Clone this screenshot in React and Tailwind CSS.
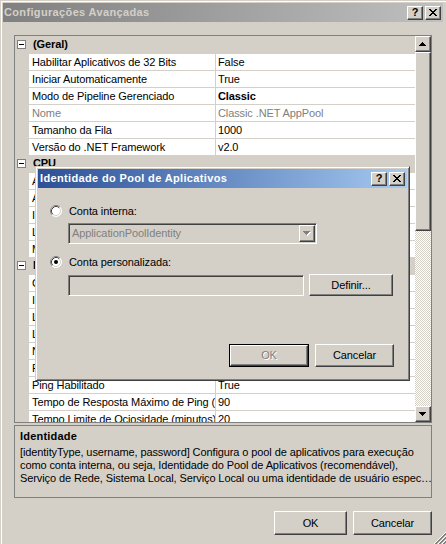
import React from 'react'

// Classic 3D edges
const raised =
  'border border-t-white border-l-white border-r-[#404040] border-b-[#404040] shadow-[inset_-1px_-1px_0_#808080] bg-[#d4d0c8]'
const sunken =
  'border border-t-[#808080] border-l-[#808080] border-r-white border-b-white shadow-[inset_1px_1px_0_#404040,inset_-1px_-1px_0_#d4d0c8]'

const rows = [
  { cat: '(Geral)' },
  { n: 'Habilitar Aplicativos de 32 Bits', v: 'False' },
  { n: 'Iniciar Automaticamente', v: 'True' },
  { n: 'Modo de Pipeline Gerenciado', v: 'Classic', bold: true },
  { n: 'Nome', v: 'Classic .NET AppPool', gray: true },
  { n: 'Tamanho da Fila', v: '1000' },
  { n: 'Versão do .NET Framework', v: 'v2.0' },
  { cat: 'CPU' },
  { n: 'Ação de Limite', v: 'NoAction' },
  { n: 'Afinidade de Processador Habilitada', v: 'False' },
  { n: 'Intervalo de Limite (minutos)', v: '5' },
  { n: 'Limite', v: '0' },
  { n: 'Máscara de Afinidade do Processador', v: '4294967295' },
  { cat: 'Modelo de Processo' },
  { n: 'Carregar Perfil de Usuário', v: 'False' },
  { n: 'Identidade', v: 'NetworkService' },
  { n: 'Limite de Tempo de Desligamento (segundos)', v: '90' },
  { n: 'Limite de Tempo de Inicialização (segundos)', v: '90' },
  { n: 'Número Máximo de Processos de Trabalho', v: '1' },
  { n: 'Período de Ping (segundos)', v: '30' },
  { n: 'Ping Habilitado', v: 'True' },
  { n: 'Tempo de Resposta Máximo de Ping (segundos)', v: '90' },
  { n: 'Tempo Limite de Ociosidade (minutos)', v: '20' },
  { cat: 'Reciclagem' },
]

function Arrow({ up, color = '#000', shadow }) {
  const bars = up ? [3, 2, 1, 0] : [0, 1, 2, 3]
  return (
    <svg width="8" height="5" viewBox="0 0 8 5" shapeRendering="crispEdges">
      {shadow &&
        bars.map((b, i) => <rect key={'s' + i} x={b + 1} y={i + 1} width={7 - b * 2} height="1" fill="#fff" />)}
      {bars.map((b, i) => (
        <rect key={i} x={b} y={i} width={7 - b * 2} height="1" fill={color} />
      ))}
    </svg>
  )
}

function CaptionButtons() {
  return (
    <div className="flex gap-[2px]">
      <div className={`${raised} flex h-[14px] w-[16px] items-center justify-center text-[11px] leading-none font-bold text-black`}>
        ?
      </div>
      <div className={`${raised} flex h-[14px] w-[16px] items-center justify-center`}>
        <svg width="8" height="7" viewBox="0 0 8 7" shapeRendering="crispEdges">
          <path d="M0 0h2v1h-2zM6 0h2v1h-2zM1 1h2v1h-2zM5 1h2v1h-2zM2 2h4v1h-4zM3 3h2v1h-2zM2 4h4v1h-4zM1 5h2v1h-2zM5 5h2v1h-2zM0 6h2v1h-2zM6 6h2v1h-2z" fill="#000" />
        </svg>
      </div>
    </div>
  )
}

function Radio({ checked }) {
  return (
    <svg width="12" height="12" viewBox="0 0 12 12" className="shrink-0">
      <circle cx="6" cy="6" r="5.5" fill="#fff" />
      <path d="M2.11 9.89A5.5 5.5 0 0 1 9.89 2.11" fill="none" stroke="#808080" />
      <path d="M9.89 2.11A5.5 5.5 0 0 1 2.11 9.89" fill="none" stroke="#fff" />
      <path d="M2.82 9.18A4.5 4.5 0 0 1 9.18 2.82" fill="none" stroke="#404040" />
      <path d="M9.18 2.82A4.5 4.5 0 0 1 2.82 9.18" fill="none" stroke="#d4d0c8" />
      {checked && <circle cx="6" cy="6" r="2" fill="#000" />}
    </svg>
  )
}

function GridRow({ r }) {
  if (r.cat) {
    return (
      <div className="flex h-[17px] shrink-0 items-center bg-[#d4d0c8]">
        <div className="ml-[2px] flex h-[9px] w-[9px] items-center justify-center border border-[#808080] bg-white">
          <div className="h-px w-[5px] bg-black" />
        </div>
        <span className="ml-[7px] font-bold">{r.cat}</span>
      </div>
    )
  }
  const tone = r.gray ? 'text-[#808080]' : 'text-black'
  return (
    <div className="flex h-[17px] shrink-0 bg-[#d4d0c8]">
      <div className="w-[14px] shrink-0" />
      <div className="flex flex-1 border-t border-[#d4d0c8] bg-white">
        <div className={`w-[186px] shrink-0 overflow-hidden pl-[3px] leading-[16px] whitespace-nowrap ${tone}`}>{r.n}</div>
        <div className="w-px shrink-0 bg-[#d4d0c8]" />
        <div className={`flex-1 overflow-hidden pl-[2px] leading-[16px] whitespace-nowrap ${tone} ${r.bold ? 'font-bold' : ''}`}>
          {r.v}
        </div>
      </div>
    </div>
  )
}

function Scrollbar() {
  return (
    <div className="flex w-[16px] shrink-0 flex-col">
      <div className={`${raised} flex h-[16px] shrink-0 items-center justify-center`}>
        <Arrow up />
      </div>
      <div className={`${raised} h-[179px] shrink-0`} />
      <div className="flex-1 bg-[repeating-conic-gradient(#ffffff_0_25%,#d4d0c8_0_50%)] bg-[length:2px_2px]" />
      <div className={`${raised} flex h-[16px] shrink-0 items-center justify-center`}>
        <Arrow />
      </div>
    </div>
  )
}

function IdentityDialog() {
  return (
    <div className="absolute top-[166px] left-[35px] flex h-[215px] w-[375px] flex-col border border-t-[#d4d0c8] border-l-[#d4d0c8] border-r-[#404040] border-b-[#404040] bg-[#d4d0c8] p-[2px] shadow-[inset_1px_1px_0_#fff,inset_-1px_-1px_0_#808080]">
      <div className="flex h-[19px] shrink-0 items-center justify-between bg-linear-to-r from-[#2e5096] to-[#a6caf0] pr-[2px] pl-[2px]">
        <span className="text-[11px] font-bold tracking-[0.35px] text-white">Identidade do Pool de Aplicativos</span>
        <CaptionButtons />
      </div>

      <div className="flex flex-1 flex-col pr-[13px] pl-[12px]">
        <div className="mt-[14px] flex h-[18px] items-center gap-[7px]">
          <Radio />
          <span>Conta interna:</span>
        </div>
        <div className={`${sunken} mt-[3px] ml-[18px] flex h-[21px] w-[249px] items-center justify-between bg-[#d4d0c8] pr-[1px] pl-[3px]`}>
          <span className="text-[#808080]">ApplicationPoolIdentity</span>
          <div className={`${raised} flex h-[17px] w-[16px] items-center justify-center`}>
            <Arrow color="#808080" shadow />
          </div>
        </div>

        <div className="mt-[9px] flex h-[18px] items-center gap-[7px]">
          <Radio checked />
          <span>Conta personalizada:</span>
        </div>
        <div className="mt-[3px] ml-[18px] flex h-[22px] items-center gap-[5px]">
          <div className={`${sunken} h-[21px] w-[236px] bg-[#d4d0c8]`} />
          <div className={`${raised} flex h-[22px] w-[84px] items-center justify-center`}>Definir...</div>
        </div>

        <div className="mt-[48px] flex justify-end gap-[6px]">
          <div className="h-[23px] w-[80px] border border-black">
            <div className={`${raised} flex h-full w-full items-center justify-center text-[#808080] [text-shadow:1px_1px_0_#fff]`}>
              OK
            </div>
          </div>
          <div className={`${raised} flex h-[23px] w-[79px] items-center justify-center`}>Cancelar</div>
        </div>
      </div>
    </div>
  )
}

export default function App() {
  return (
    <div className="relative h-[544px] w-[446px] overflow-hidden bg-[#d4d0c8] px-[3px] pt-[3px] font-['Liberation_Sans',Arial,sans-serif] text-[11px] tracking-[-0.1px] text-black shadow-[inset_1px_1px_0_#d4d0c8,inset_2px_2px_0_#fff]">
      <div className="flex h-[19px] items-center justify-between bg-linear-to-r from-[#808080] to-[#c0c0c0] pr-[2px] pl-[1px]">
        <span className="text-[11px] font-bold tracking-[0.35px] text-[#d4d0c8]">Configurações Avançadas</span>
        <CaptionButtons />
      </div>

      <div className="px-[11px]">
        <div className="mt-[13px] flex h-[388px] overflow-hidden border border-[#808080] bg-[#d4d0c8]">
          <div className="flex flex-1 flex-col overflow-hidden">
            {rows.map((r, i) => (
              <GridRow key={i} r={r} />
            ))}
          </div>
          <Scrollbar />
        </div>

        <div className="mt-[2px] h-[73px] border border-[#808080] pt-[4px] pl-[5px] leading-[13px]">
          <div className="font-bold tracking-[0.2px]">Identidade</div>
          <div className="mt-[3px] whitespace-nowrap">
            [identityType, username, password] Configura o pool de aplicativos para execução
          </div>
          <div className="whitespace-nowrap">
            como conta interna, ou seja, Identidade do Pool de Aplicativos (recomendável),
          </div>
          <div className="whitespace-nowrap">
            Serviço de Rede, Sistema Local, Serviço Local ou uma identidade de usuário espec…
          </div>
        </div>

        <div className="mt-[13px] flex justify-end gap-[6px]">
          <div className={`${raised} flex h-[24px] w-[73px] items-center justify-center`}>OK</div>
          <div className={`${raised} flex h-[24px] w-[79px] items-center justify-center`}>Cancelar</div>
        </div>
      </div>

      <svg className="absolute right-0 bottom-0" width="13" height="13" viewBox="0 0 13 13">
        {[0, 4, 8].map((k) => (
          <g key={k}>
            <line x1={13} y1={k + 1} x2={k + 1} y2={13} stroke="#fff" />
            <line x1={13} y1={k + 2} x2={k + 2} y2={13} stroke="#808080" />
            <line x1={13} y1={k + 3} x2={k + 3} y2={13} stroke="#808080" />
          </g>
        ))}
      </svg>

      <IdentityDialog />
    </div>
  )
}
